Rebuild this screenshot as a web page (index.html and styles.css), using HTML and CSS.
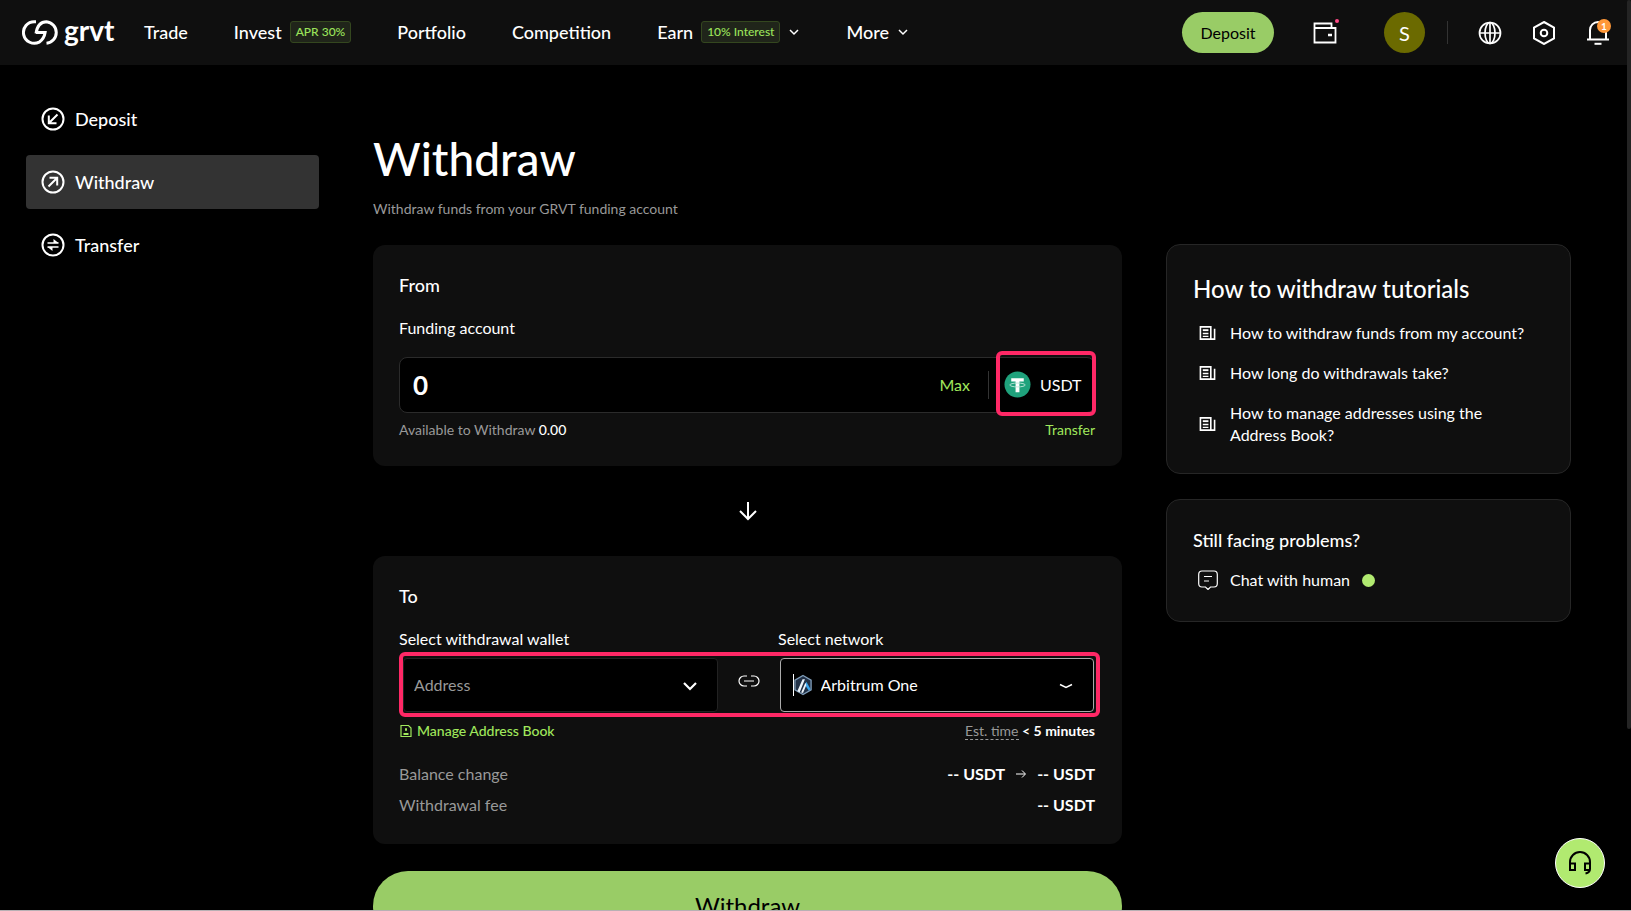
FILE: index.html
```html
<!DOCTYPE html>
<html lang="en">
<head>
<meta charset="utf-8">
<meta name="viewport" content="width=device-width, initial-scale=1">
<title>Withdraw | grvt</title>
<link rel="stylesheet" href="styles.css">
</head>
<body>
<svg class="sprite" aria-hidden="true">
  <symbol id="chevron" viewBox="0 0 12 12"><path d="M2 4l4 4 4-4" fill="none" stroke="currentColor" stroke-width="1.5"/></symbol>
  <symbol id="article" viewBox="0 0 18 16"><path d="M1.5 1.5h11v13h-11zM12.5 14.5h4v-11" fill="none" stroke="currentColor" stroke-width="1.7"/><path d="M4 4h6v2H4z" fill="currentColor"/><path d="M4 8.5h6M4 11.5h6" stroke="currentColor" stroke-width="1.4"/></symbol>
</svg>

<header class="topbar">
  <a class="logo" href="#" aria-label="grvt home">
    <svg class="logo-mark" viewBox="0 0 36 25" fill="none" stroke="currentColor" stroke-width="3">
      <path d="M13.500 1.700H12.200a10.800 10.800 0 1 0 4.500 20.400C20.500 19.800 22 16.500 22.600 12.600H13.500"/>
      <path d="M13.500 13.500C14.500 6.500 17.500 1.700 24 1.700a10.800 10.800 0 0 1 0 21.500"/>
    </svg>
    <span class="logo-text">grvt</span>
  </a>
  <nav class="mainnav" aria-label="Main">
    <a href="#">Trade</a>
    <a href="#">Invest <span class="tag">APR 30%</span></a>
    <a href="#">Portfolio</a>
    <a href="#">Competition</a>
    <a href="#">Earn <span class="tag">10% Interest</span><svg class="caret"><use href="#chevron"/></svg></a>
    <a href="#">More <svg class="caret"><use href="#chevron"/></svg></a>
  </nav>
  <div class="tools">
    <button class="deposit" type="button">Deposit</button>
    <button class="icon-button wallet" type="button" aria-label="Wallet">
      <svg viewBox="0 0 28 28" fill="none" stroke="currentColor" stroke-width="1.8"><path d="M20.500 9V4.500H3.500V23.500H24.500V9H3.500"/><path d="M17 16h4" stroke-width="2.500"/></svg>
      <span class="dot"></span>
    </button>
    <button class="avatar" type="button">S</button>
    <span class="divider"></span>
    <button class="icon-button" type="button" aria-label="Language">
      <svg viewBox="0 0 24 24" fill="none" stroke="currentColor" stroke-width="1.700"><circle cx="12" cy="12" r="10.500"/><ellipse cx="12" cy="12" rx="5" ry="10.500"/><path d="M1.500 12h21M12 1.500v21"/></svg>
    </button>
    <button class="icon-button" type="button" aria-label="Settings">
      <svg viewBox="0 0 24 24" fill="none" stroke="currentColor" stroke-width="2"><path d="M12 1L22 6.500V17.500L12 23L2 17.500V6.500Z"/><circle cx="12" cy="12" r="3.300"/></svg>
    </button>
    <button class="icon-button" type="button" aria-label="Notifications">
      <svg viewBox="0 0 24 24" fill="none" stroke="currentColor" stroke-width="2"><path d="M1 18.500H23M4 18.500V9a8 8 0 0 1 16 0V18.500"/><path d="M8.500 22.800h7"/></svg>
      <span class="count">1</span>
    </button>
  </div>
</header>

<div class="layout">
  <nav class="sidebar" aria-label="Funds">
    <a href="#"><svg viewBox="0 0 24 24" fill="none" stroke="currentColor" stroke-width="2"><circle cx="12" cy="12" r="10.500"/><path d="M16.500 7.500L8 16M7.800 8.500V16.200H15.500"/></svg>Deposit</a>
    <a class="active" href="#" aria-current="page"><svg viewBox="0 0 24 24" fill="none" stroke="currentColor" stroke-width="2"><circle cx="12" cy="12" r="10.500"/><path d="M7.500 16.500L16 8M8.500 7.800H16.200V15.500"/></svg>Withdraw</a>
    <a href="#"><svg viewBox="0 0 24 24" fill="none" stroke="currentColor" stroke-width="2"><circle cx="12" cy="12" r="10.500"/><path d="M6.500 10H17.500M6.500 14H17.500" stroke-width="1.700"/><path d="M12.500 6l5 4h-5zM11.500 18l-5-4h5z" fill="currentColor" stroke="none"/></svg>Transfer</a>
  </nav>

  <main class="content">
    <form class="withdraw">
      <h1>Withdraw</h1>
      <p class="intro">Withdraw funds from your GRVT funding account</p>

      <section class="card from">
        <h2>From</h2>
        <label class="label" for="amount">Funding account</label>
        <div class="amount-box">
          <input id="amount" type="text" value="0">
          <button class="max" type="button">Max</button>
          <span class="split"></span>
          <button class="currency" type="button">
            <svg viewBox="0 0 28 28"><circle cx="14" cy="14" r="13.500" fill="#1fa27c"/><path d="M7.500 7.500h13v3.500H16v11h-4V11H7.500z" fill="#fff"/><ellipse cx="14" cy="14.500" rx="8" ry="2" fill="none" stroke="#b9e4d6"/></svg>
            USDT
          </button>
        </div>
        <div class="row small">
          <span class="muted">Available to Withdraw <b>0.00</b></span>
          <a class="green" href="#">Transfer</a>
        </div>
      </section>

      <svg class="down" viewBox="0 0 24 24" fill="none" stroke="currentColor" stroke-width="2"><path d="M12 3V20M4 12l8 8 8-8"/></svg>

      <section class="card to">
        <h2>To</h2>
        <div class="labels">
          <label class="label" for="wallet">Select withdrawal wallet</label>
          <label class="label" for="network">Select network</label>
        </div>
        <div class="selects">
          <div class="select">
            <select id="wallet"><option>Address</option></select>
            <svg class="select-caret" viewBox="0 0 16 16" fill="none" stroke="currentColor" stroke-width="2.200"><path d="M2 5l6 6 6-6"/></svg>
          </div>
          <svg class="link" viewBox="0 0 22 12" fill="none" stroke="currentColor" stroke-width="1.200"><path d="M9 1H6a5 5 0 0 0 0 10h3M13 1h3a5 5 0 0 1 0 10h-3M6 6h10"/></svg>
          <div class="select network">
            <svg class="arbitrum" viewBox="0 0 20 22"><path d="M9.500 1L18 6v10l-8.500 5L1 16V6z" fill="#213147" stroke="#7f9cb8" stroke-width="1.400"/><path d="M11.500 11l1.500-3.500 4.500 8-2 1.300z" fill="#39a4ec"/><path d="M3.500 17.500L9 5h2.500L6 18.500zM7.500 19L12 8.500l1 2.500-3.500 8.500z" fill="#eef4fa"/></svg>
            <select id="network"><option>Arbitrum One</option></select>
            <svg class="select-caret" viewBox="0 0 16 16" fill="none" stroke="currentColor" stroke-width="1.500"><path d="M2 6.500l6 3 6-3"/></svg>
          </div>
        </div>
        <div class="row small">
          <a class="green book" href="#"><svg viewBox="0 0 14 14" fill="none" stroke="currentColor" stroke-width="1.200"><path d="M2 1.500h7.500L12 4v8.500H2z"/><path d="M7 4.300v2.400M4.500 10h5" stroke-width="2"/></svg>Manage Address Book</a>
          <span class="time"><span class="est">Est. time</span> <b>&lt; 5 minutes</b></span>
        </div>
        <dl class="summary">
          <div><dt>Balance change</dt><dd>-- USDT <svg viewBox="0 0 12 12" fill="none" stroke="currentColor"><path d="M1 6h9M7 2.500L10.500 6 7 9.500"/></svg> -- USDT</dd></div>
          <div><dt>Withdrawal fee</dt><dd>-- USDT</dd></div>
        </dl>
      </section>

      <button class="submit" type="submit">Withdraw</button>
    </form>

    <aside class="help">
      <section class="panel">
        <h2 class="panel-title">How to withdraw tutorials</h2>
        <ul>
          <li><a href="#"><svg><use href="#article"/></svg>How to withdraw funds from my account?</a></li>
          <li><a href="#"><svg><use href="#article"/></svg>How long do withdrawals take?</a></li>
          <li><a href="#"><svg><use href="#article"/></svg><span>How to manage addresses using the Address Book?</span></a></li>
        </ul>
      </section>
      <section class="panel chat">
        <h2>Still facing problems?</h2>
        <a href="#"><svg viewBox="0 0 20 20" fill="none" stroke="currentColor" stroke-width="1.200"><path d="M4 1H16Q19.300 1 19.300 4.500V13.500Q19.300 17 16 17H12.500L10 19.500 7.500 17H4Q.7 17 .7 13.500V4.500Q.7 1 4 1ZM6 6.500h8M6 11h5"/></svg>Chat with human<span class="online"></span></a>
      </section>
    </aside>
  </main>
</div>

<button class="support" type="button" aria-label="Support">
  <svg viewBox="0 0 24 24" fill="none" stroke="currentColor" stroke-width="2"><path d="M2 13V11a10 10 0 0 1 20 0V18Q22 21.500 17.500 22.500M2 12.500V19H7V12.500H2M22 12.500H17V19H22"/></svg>
</button>
<div class="scrollbar"></div>
</body>
</html>
```
FILE: styles.css
```css
* { box-sizing: border-box; }

body {
  margin: 0;
  height: 100vh;
  overflow: hidden;
  background: #000;
  color: #fff;
  font: 400 16px/22px Lato, "Open Sans", sans-serif;
}
body::after {
  content: "";
  position: fixed;
  inset: auto 0 0;
  height: 1px;
  background: #b8b0b4;
}

a { color: inherit; text-decoration: none; }
button, input, select { font: inherit; color: inherit; border: 0; background: none; padding: 0; }
button { cursor: pointer; }
svg { display: block; flex: none; }
h1, h2, p, ul, dl, dd { margin: 0; padding: 0; }
ul { list-style: none; }
h2 { font-size: 18px; line-height: 24px; font-weight: 500; }
b { font-weight: 500; color: #fff; }
.sprite { position: absolute; width: 0; height: 0; }

.topbar {
  display: flex;
  align-items: center;
  height: 65px;
  padding: 0 21px 0 22px;
  background: #0f0f0f;
}
.logo { display: flex; align-items: center; gap: 5px; width: 122px; }
.logo-mark { width: 37px; height: 25px; }
.logo-text { padding-bottom: 5px; font-size: 28px; line-height: 32px; font-weight: 700; }

.mainnav { display: flex; gap: 46px; font-size: 18px; font-weight: 500; }
.mainnav a { display: flex; align-items: center; gap: 8px; padding-bottom: 1px; white-space: nowrap; }
.tag {
  padding: 0 5px;
  border: 1px solid #34471f;
  border-radius: 3px;
  background: #20251a;
  color: #9be35a;
  font-size: 12px;
  line-height: 20px;
  font-weight: 500;
}
.caret { width: 12px; height: 12px; }

.tools { display: flex; align-items: center; margin-left: auto; }
.deposit {
  width: 92px;
  height: 41px;
  border-radius: 21px;
  background: #99cc66;
  color: #000;
}
.icon-button { position: relative; margin-left: 30px; }
.icon-button svg { width: 24px; height: 24px; }
.wallet { margin-left: 37px; }
.wallet svg { width: 28px; height: 28px; }
.dot { position: absolute; top: 0; right: 0; width: 4px; height: 4px; border-radius: 50%; background: #ff4a86; }
.avatar { width: 41px; height: 41px; margin-left: 45px; border-radius: 50%; background: #6b6a00; font-size: 20px; }
.divider { width: 1px; height: 23px; margin-left: 22px; background: #333; }
.count {
  position: absolute;
  top: -2px;
  right: -1px;
  width: 14px;
  border-radius: 7px;
  background: #ff9838;
  font-size: 10px;
  line-height: 14px;
  font-weight: 700;
}

.layout {
  display: grid;
  grid-template-columns: 293px 1fr;
  gap: 54px;
  padding: 27px 60px 0 26px;
}
.sidebar { display: flex; flex-direction: column; gap: 9px; font-size: 18px; font-weight: 500; }
.sidebar a { display: flex; align-items: center; gap: 10px; height: 54px; padding-left: 15px; border-radius: 4px; }
.sidebar svg { width: 24px; height: 24px; }
.sidebar .active { background: #333; }

.content { display: grid; grid-template-columns: 1fr 405px; gap: 44px; align-items: start; }
.withdraw { display: flex; flex-direction: column; padding-top: 36px; }
h1 { font-size: 46px; line-height: 62px; font-weight: 500; }
.intro { margin-top: 9px; font-size: 14px; line-height: 20px; color: #999; }

.card { padding: 28px 27px 28px 26px; border-radius: 12px; background: #0f0f0f; }
.from { margin-top: 26px; padding-bottom: 26px; }
.label { display: block; }
.from .label { margin-top: 20px; }
.amount-box {
  display: flex;
  align-items: center;
  height: 56px;
  margin-top: 18px;
  padding-left: 13px;
  border: 1px solid #2b2b2b;
  border-radius: 8px;
  background: #000;
}
.amount-box input { flex: 1; min-width: 0; font-size: 26px; line-height: 36px; font-weight: 700; outline: 0; }
.max { color: #a0e85c; }
.split { width: 1px; height: 28px; margin: 0 7px 0 18px; background: #333; }
.currency {
  display: flex;
  align-items: center;
  gap: 9px;
  width: 100px;
  height: 65px;
  margin: 0 -2px 4px 0;
  padding: 3px 0 0 4px;
  border: 4px solid #ff2866;
  border-radius: 6px;
}
.currency svg { width: 27px; height: 27px; }
.row { display: flex; justify-content: space-between; align-items: center; }
.small { font-size: 14px; line-height: 20px; }
.from .row { margin-top: 7px; }
.muted { color: #999; }
.green { color: #a0e85c; }
.down { width: 24px; height: 24px; margin: 33px auto; }

.labels { display: grid; grid-template-columns: 1fr 1fr; gap: 62px; margin-top: 20px; }
.selects {
  display: grid;
  grid-template-columns: 1fr 22px 1fr;
  gap: 20px;
  height: 65px;
  margin: 2px -5px 0 0;
  padding: 2px 2px 0 0;
  border: 4px solid #ff2866;
  border-radius: 6px;
}
.select { position: relative; height: 54px; }
.select select {
  width: 100%;
  height: 100%;
  padding: 0 10px;
  border: 1px solid #222;
  border-radius: 4px;
  background: #000;
  color: #999;
  appearance: none;
}
.network select { padding-left: 40px; border-color: #aaa; color: #fff; }
.select-caret { position: absolute; top: 20px; right: 20px; width: 16px; height: 16px; }
.arbitrum { position: absolute; top: 16px; left: 13px; width: 20px; height: 22px; border-left: 1px solid #fff; }
.link { width: 22px; height: 12px; margin-top: 17px; }
.to .row { margin-top: 4px; }
.book { display: flex; align-items: center; gap: 4px; font-weight: 500; }
.book svg { width: 14px; height: 14px; }
.est { color: #999; border-bottom: 1px dashed #999; }
.time b { font-weight: 700; }
.summary { display: grid; gap: 9px; margin-top: 22px; }
.summary div { display: flex; justify-content: space-between; }
.summary dt { color: #999; }
.summary dd { display: flex; align-items: center; gap: 10px; font-weight: 700; }
.summary svg { width: 12px; height: 12px; }
.submit {
  height: 70px;
  margin-top: 27px;
  border-radius: 35px;
  background: #99cc66;
  color: #000;
  font-size: 24px;
}

.help { display: grid; gap: 25px; padding-top: 152px; }
.panel { padding: 28px 36px 27px 26px; border: 1px solid #262626; border-radius: 14px; background: #0f0f0f; }
.panel-title { font-size: 24px; line-height: 32px; }
.panel ul { display: grid; gap: 18px; margin-top: 17px; }
.panel a { display: flex; align-items: center; gap: 14px; padding-left: 6px; }
.panel ul svg { width: 17px; height: 16px; }
.chat { padding-bottom: 30px; }
.chat a { margin-top: 17px; gap: 12px; padding-left: 5px; }
.chat a svg { width: 20px; height: 20px; }
.online { width: 13px; height: 13px; border-radius: 50%; background: #b1ea70; }

.support {
  position: fixed;
  right: 26px;
  bottom: 23px;
  display: grid;
  place-items: center;
  width: 50px;
  height: 50px;
  border: 1px solid #fff;
  border-radius: 50%;
  background: #b1ea70;
  color: #000;
}
.support svg { width: 24px; height: 24px; }
.scrollbar { position: fixed; top: 0; right: 0; width: 4px; height: 80%; border-radius: 2px; background: #242424; }
```
